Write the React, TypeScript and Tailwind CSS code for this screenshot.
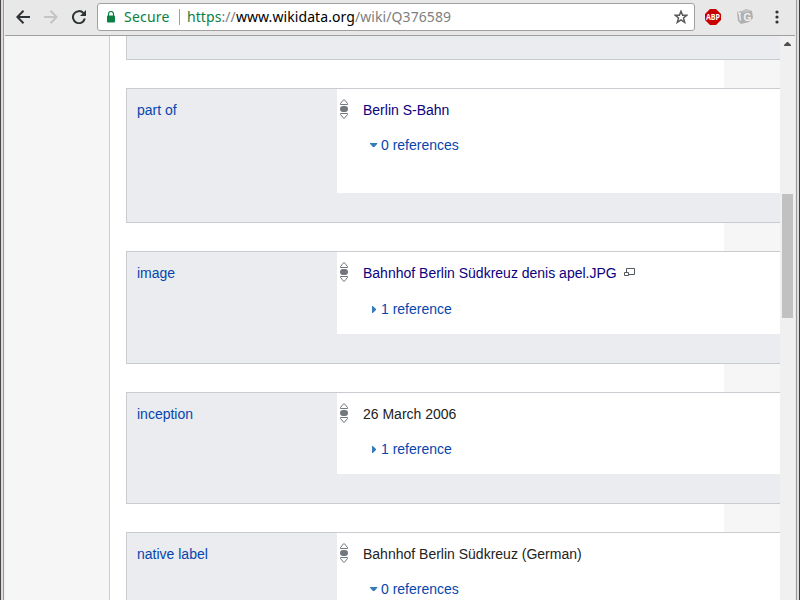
import React from "react";

type Row = {
  label: string;
  value: string;
  link?: boolean;
  media?: boolean;
  open: boolean;
  refs: string;
  height: string;
  body: string;
  refGap: string;
};

const rows: Row[] = [
  { label: "part of", value: "Berlin S-Bahn", link: true, open: true, refs: "0 references", height: "h-[135px]", body: "h-[104px]", refGap: "mt-[15px]" },
  { label: "image", value: "Bahnhof Berlin Südkreuz denis apel.JPG", link: true, media: true, open: false, refs: "1 reference", height: "h-[113px]", body: "h-[82px]", refGap: "mt-[16px]" },
  { label: "inception", value: "26 March 2006", open: false, refs: "1 reference", height: "h-[112px]", body: "h-[81px]", refGap: "mt-[15px]" },
  { label: "native label", value: "Bahnhof Berlin Südkreuz (German)", open: true, refs: "0 references", height: "h-[135px]", body: "h-[104px]", refGap: "mt-[15px]" },
];

function Rank() {
  return (
    <svg width="8" height="20" viewBox="0 0 8 20" className="mt-[10px] ml-[3px] shrink-0" fill="#fff" stroke="#72777d" strokeWidth="1">
      <path d="M.5 5.5V4.500L3.500.8h1l3 3.700v1z" />
      <rect x="0" y="7" width="8" height="6" rx="3" fill="#72777d" stroke="none" />
      <path d="M.5 14.500v1l3 3.700h1l3-3.700v-1z" />
    </svg>
  );
}

function Statement({ row }: { row: Row }) {
  return (
    <section className={`flex shrink-0 border border-r-0 border-[#c8ccd1] bg-[#eaecf0] ${row.height}`}>
      <div className="w-[210px] shrink-0 pt-[11px] pl-[10px] text-[#0645ad]">{row.label}</div>
      <div className={`flex flex-1 bg-white ${row.body}`}>
        <Rank />
        <div className="ml-[15px] pt-[11px]">
          <div className={`flex ${row.link ? "text-[#0b0080]" : "text-[#222]"}`}>
            {row.value}
            {row.media && (
              <svg width="12" height="10" viewBox="0 0 12 10" className="mt-[4px] ml-[7px]" fill="#fff" stroke="#54595d">
                <path d="M2.500 1.500h8v6h-8z" />
                <path d="M.5 5.500h4v3h-4z" />
              </svg>
            )}
          </div>
          <div className={`flex pl-[7px] text-[#0645ad] ${row.refGap}`}>
            <svg width="8" height="8" viewBox="0 0 8 8" className="mt-[7px] mr-[3px]" fill="#347bb7">
              {row.open ? <path d="M0 1h7.300v.8L4.400 5H2.900L0 1.800z" /> : <path d="M2 0h.8L6 2.900v1.200L2.800 7H2z" />}
            </svg>
            {row.refs}
          </div>
        </div>
      </div>
    </section>
  );
}

function Toolbar() {
  return (
    <header className="flex h-[36px] shrink-0 items-center border-b border-[#a0a0a0] bg-[#e8e8e8] pb-[2px] pl-[11px]">
      <svg width="14" height="14" viewBox="0 0 14 14" fill="none" stroke="#2e3436" strokeWidth="2">
        <path d="M14 7H1.500M7.500 .8L1.300 7l6.200 6.200" />
      </svg>
      <svg width="14" height="14" viewBox="0 0 14 14" className="ml-[14px]" fill="none" stroke="#c3c4c4" strokeWidth="2">
        <path d="M0 7h12.500M6.500 .8L12.700 7l-6.200 6.200" />
      </svg>
      <svg width="14" height="14" viewBox="0 0 14 14" className="ml-[14px]">
        <path d="M11.500 3.200A6 6 0 1 0 12.800 8.500" fill="none" stroke="#2e3436" strokeWidth="2" />
        <path d="M14 0v6H8z" fill="#2e3436" />
      </svg>
      <div className="ml-[11px] flex h-[28px] w-[598px] shrink-0 items-center rounded-[3px] border border-[#a0a0a0] bg-white pl-[9px] font-['Noto_Sans',sans-serif] text-[14px] leading-[20px]">
        <svg width="8" height="12" viewBox="0 0 8 12">
          <path d="M1.500 5V3a2.500 2.500 0 0 1 5 0v2" fill="none" stroke="#0b8043" strokeWidth="1.200" />
          <rect y="4.500" width="8" height="7" rx="1" fill="#0b8043" />
        </svg>
        <span className="ml-[9px] w-[55px] whitespace-nowrap tracking-[0.2px] text-[#0b8043]">Secure</span>
        <span className="h-[16px] w-px bg-[#a0a0a0]" />
        <span className="ml-[7px] whitespace-nowrap tracking-[0.08px] text-[#808080]"><span className="text-[#0b8043]">https</span>://<span className="text-black">www.wikidata.org</span>/wiki/Q376589</span>
        <svg width="14" height="14" viewBox="0 0 14 14" className="mr-[6px] ml-auto" fill="none" stroke="#5a5a5a" strokeWidth="1.500">
          <path d="M7 1.200l1.600 4h4.200L9.500 7.900l1.200 4.500L7 9.900l-3.700 2.500 1.200-4.500L1.200 5.200h4.200z" />
        </svg>
      </div>
      <svg width="16" height="16" viewBox="0 0 16 16" className="ml-[10px]">
        <path d="M5 0h6l5 5v6l-5 5H5l-5-5V5z" fill="#c70000" />
        <text x="8" y="11" textAnchor="middle" textLength="14" lengthAdjust="spacingAndGlyphs" className="font-['Open_Sans',sans-serif] text-[8px] font-bold" fill="#fff">ABP</text>
      </svg>
      <svg width="16" height="15" viewBox="0 0 16 15" className="ml-[16px]">
        <path d="M0 3l5-1 4-2 6 2 1 7-4 4-8 2-3-3z" fill="#b0b0b0" />
        <path d="M5 2.500L9 0l6 2-9 1.500z" fill="#c4c4c4" />
        <text x="10.300" y="11.500" textAnchor="middle" className="font-['Liberation_Sans',sans-serif] text-[10px] font-bold" fill="#f2f2f2">G</text>
        <path d="M1 4l3 .5M2.500 4.500l1 7" stroke="#eee" strokeWidth="1.500" />
      </svg>
      <svg width="4" height="14" viewBox="0 0 4 14" className="ml-[22px]" fill="#2e3436">
        <circle cx="2" cy="2" r="1.600" /><circle cx="2" cy="7" r="1.600" /><circle cx="2" cy="12" r="1.600" />
      </svg>
    </header>
  );
}

export default function App() {
  return (
    <div className="flex h-[600px] w-[800px] overflow-hidden bg-[#e8e8e8]">
      <div className="w-px shrink-0 bg-[#4b4748]" />
      <div className="w-[2px] shrink-0 bg-[#dedcdb]" />
      <div className="w-px shrink-0 bg-[#9b9896]" />
      <div className="w-px shrink-0 bg-[#f0f0f0]" />
      <div className="flex w-[790px] shrink-0 flex-col">
        <Toolbar />
        <div className="flex h-[564px] font-['Liberation_Sans',Arial,sans-serif] text-[14px] leading-[20px]">
          <aside className="w-[104px] shrink-0 bg-[#f6f6f6]" />
          <main className="flex w-[671px] shrink-0 flex-col gap-[28px] border-l border-[#a7d7f9] bg-[linear-gradient(to_right,white_614px,#f6f6f6_614px)] pl-[16px]">
            <div className="h-[24px] shrink-0 border-b border-l border-[#c8ccd1] bg-[#eaecf0]" />
            {rows.map((row) => <Statement key={row.label} row={row} />)}
          </main>
          <div className="flex w-[15px] shrink-0 flex-col bg-[#f0f0f0] pl-[2px]">
            <svg width="11" height="16" viewBox="0 0 11 16" className="self-start"><path d="M2 10V9l3-3h1l3 3v1z" fill="#505050" /></svg>
            <div className="mt-[142px] h-[124px] w-[11px] bg-[#c1c1c1]" />
          </div>
        </div>
      </div>
      <div className="w-px bg-[#e8e8e8]" />
      <div className="w-px bg-[#9b9b9b]" />
      <div className="w-[2px] bg-[#dedede]" />
      <div className="w-px bg-[#3c3c3c]" />
    </div>
  );
}
